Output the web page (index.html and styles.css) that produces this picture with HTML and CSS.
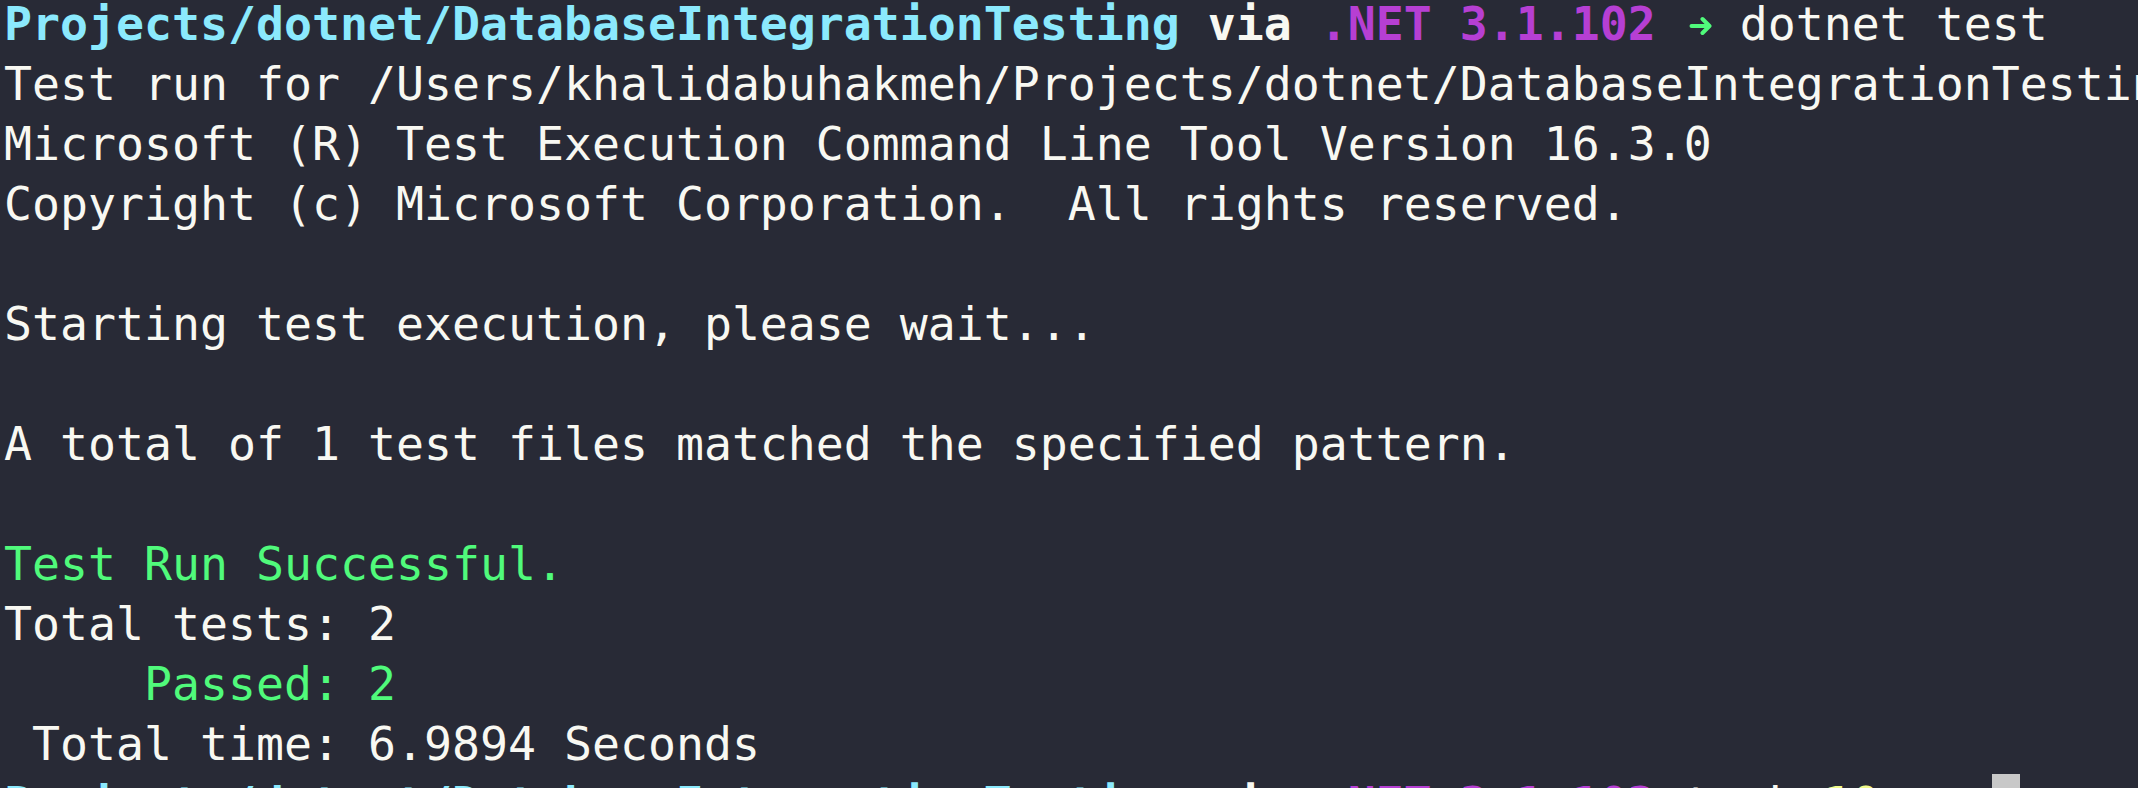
FILE: index.html
```html
<!DOCTYPE html>
<html lang="en">
<head>
<meta charset="utf-8">
<title>Terminal</title>
<link rel="stylesheet" href="styles.css">
</head>
<body>
<div class="term">
  <div class="line"><span class="path">Projects/dotnet/DatabaseIntegrationTesting</span> <span class="bold">via</span> <span class="net">.NET 3.1.102</span> <span class="arrow"><svg viewBox="0 0 28 60" width="28" height="60"><path d="M7.5 32H25M18.5 25L25.5 32L18.5 39" fill="none" stroke="#50fa7b" stroke-width="4" stroke-linecap="round" stroke-linejoin="round"/></svg></span> dotnet test</div>
  <div class="line">Test run for /Users/khalidabuhakmeh/Projects/dotnet/DatabaseIntegrationTesting/bin/Debug/netcoreapp3.1/DatabaseIntegrationTesting.dll(.NETCoreApp,Version=v3.1)</div>
  <div class="line">Microsoft (R) Test Execution Command Line Tool Version 16.3.0</div>
  <div class="line">Copyright (c) Microsoft Corporation.  All rights reserved.</div>
  <div class="line"> </div>
  <div class="line">Starting test execution, please wait...</div>
  <div class="line"> </div>
  <div class="line">A total of 1 test files matched the specified pattern.</div>
  <div class="line"> </div>
  <div class="line ok">Test Run Successful.</div>
  <div class="line">Total tests: 2</div>
  <div class="line"><span class="ok">     Passed: 2</span></div>
  <div class="line"> Total time: 6.9894 Seconds</div>
  <div class="line"><span class="path">Projects/dotnet/DatabaseIntegrationTesting</span> <span class="bold">via</span> <span class="net">.NET 3.1.102</span> took <span class="dur">10s</span> <span class="arrow"><svg viewBox="0 0 28 60" width="28" height="60"><path d="M7.5 32H25M18.5 25L25.5 32L18.5 39" fill="none" stroke="#50fa7b" stroke-width="4" stroke-linecap="round" stroke-linejoin="round"/></svg></span> <span class="cursor"> </span></div>
</div>
</body>
</html>
```
FILE: styles.css
```css
html, body {
  margin: 0;
  padding: 0;
  background: #282a36;
  overflow: hidden;
}

.term {
  margin-top: -6px;
  padding-left: 4px;
  font-family: "DejaVu Sans Mono", "Liberation Mono", monospace;
  font-size: 46.5px;
  line-height: 60px;
  color: #f8f8f2;
}

.line {
  height: 60px;
  overflow: hidden;
  white-space: pre;
}

.path {
  color: #8be9fd;
  font-weight: bold;
}

.bold {
  font-weight: bold;
}

.net {
  color: #b63fd3;
  font-weight: bold;
}

.ok {
  color: #50fa7b;
}

.dur {
  color: #f1fa8c;
  font-weight: bold;
}

.arrow {
  display: inline-block;
  width: 28px;
  height: 60px;
  vertical-align: top;
}

.arrow svg {
  display: block;
}

.cursor {
  display: inline-block;
  width: 28px;
  height: 60px;
  vertical-align: top;
  background: #c8c8c8;
}
```
